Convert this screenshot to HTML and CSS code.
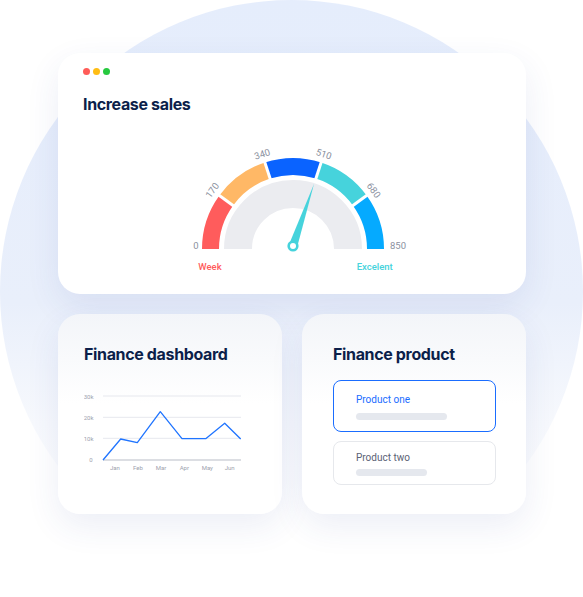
FILE: index.html
```html
<!DOCTYPE html>
<html lang="en">
<head>
<meta charset="utf-8">
<title>Sales dashboard</title>
<link rel="stylesheet" href="styles.css">
</head>
<body>
<div class="scene">
  <div class="stack">
    <section class="card card-top">
      <div class="dots">
        <span class="dot dot-red"></span>
        <span class="dot dot-yellow"></span>
        <span class="dot dot-green"></span>
      </div>
      <h2 class="title">Increase sales</h2>
      <svg class="gauge" width="240" height="140" viewBox="0 0 240 140">
        <g fill="none" stroke-width="17">
          <path d="M37.5 110 A82.5 82.5 0 0 1 53.26 61.51" stroke="#ff5c5c"/>
          <path d="M53.26 61.51 A82.5 82.5 0 0 1 94.51 31.53" stroke="#ffb866"/>
          <path d="M94.51 31.53 A82.5 82.5 0 0 1 145.49 31.53" stroke="#0a63ff"/>
          <path d="M145.49 31.53 A82.5 82.5 0 0 1 186.74 61.51" stroke="#46d3dc"/>
          <path d="M186.74 61.51 A82.5 82.5 0 0 1 202.5 110" stroke="#05aaff"/>
        </g>
        <g stroke="#fff" stroke-width="3">
          <line x1="61.75" y1="67.68" x2="43.95" y2="54.75"/>
          <line x1="97.75" y1="41.52" x2="90.95" y2="20.60"/>
          <line x1="142.25" y1="41.52" x2="149.05" y2="20.60"/>
          <line x1="178.25" y1="67.68" x2="196.05" y2="54.75"/>
        </g>
        <path d="M65 110 A55 55 0 0 1 175 110" fill="none" stroke="#ebecf0" stroke-width="28"/>
        <g class="gauge-num">
          <text x="25.5" y="110" text-anchor="end">0</text>
          <text x="39.1" y="51.2" text-anchor="middle" dominant-baseline="central" transform="rotate(-54 39.1 51.2)">170</text>
          <text x="89.1" y="14.9" text-anchor="middle" dominant-baseline="central" transform="rotate(-18 89.1 14.9)">340</text>
          <text x="150.9" y="14.9" text-anchor="middle" dominant-baseline="central" transform="rotate(18 150.9 14.9)">510</text>
          <text x="200.9" y="51.2" text-anchor="middle" dominant-baseline="central" transform="rotate(54 200.9 51.2)">680</text>
          <text x="217" y="110">850</text>
        </g>
        <polygon points="124,108.4 116,105.6 141,45" fill="#46d3dc"/>
        <circle cx="120" cy="107" r="5.6" fill="#46d3dc"/>
        <circle cx="120" cy="107" r="3" fill="#fff"/>
        <text class="gauge-lbl" x="25.3" y="127.3" dominant-baseline="central" fill="#ff5c5c">Week</text>
        <text class="gauge-lbl" x="183.7" y="127.3" dominant-baseline="central" fill="#46d3dc">Excelent</text>
      </svg>
    </section>
    <div class="row">
      <section class="card card-sm card-chart">
        <h2 class="title">Finance dashboard</h2>
        <svg class="chart" width="160" height="88" viewBox="0 0 160 88">
          <g stroke="#e6e8ee" stroke-width="1">
            <line x1="19" y1="8" x2="157" y2="8"/>
            <line x1="19" y1="29.3" x2="157" y2="29.3"/>
            <line x1="19" y1="50.3" x2="157" y2="50.3"/>
          </g>
          <line x1="19" y1="72" x2="157" y2="72" stroke="#b9bdc7" stroke-width="1"/>
          <g class="axis">
            <text x="9.5" y="8" text-anchor="end" dominant-baseline="central">30k</text>
            <text x="9.5" y="29.3" text-anchor="end" dominant-baseline="central">20k</text>
            <text x="9.5" y="50.3" text-anchor="end" dominant-baseline="central">10k</text>
            <text x="8.5" y="71" text-anchor="end" dominant-baseline="central">0</text>
            <text x="31" y="79.7" text-anchor="middle" dominant-baseline="central">Jan</text>
            <text x="54" y="79.7" text-anchor="middle" dominant-baseline="central">Feb</text>
            <text x="77" y="79.7" text-anchor="middle" dominant-baseline="central">Mar</text>
            <text x="100.3" y="79.7" text-anchor="middle" dominant-baseline="central">Apr</text>
            <text x="123.3" y="79.7" text-anchor="middle" dominant-baseline="central">May</text>
            <text x="145.7" y="79.7" text-anchor="middle" dominant-baseline="central">Jun</text>
          </g>
          <polyline points="19,72 36.7,51 53.3,54.7 76.3,23.7 98,50.7 121.7,50.7 140.7,35.3 156.7,51" fill="none" stroke="#1f74ff" stroke-width="1.3" stroke-linejoin="round"/>
        </svg>
      </section>
      <section class="card card-sm card-product">
        <h2 class="title">Finance product</h2>
        <div class="product product-active">
          <div class="product-name">Product one</div>
          <div class="product-bar bar-long"></div>
        </div>
        <div class="product">
          <div class="product-name">Product two</div>
          <div class="product-bar bar-short"></div>
        </div>
      </section>
    </div>
  </div>
</div>
</body>
</html>
```

FILE: styles.css
```css
* { box-sizing: border-box; }

html, body {
  margin: 0;
  padding: 0;
  background: #ffffff;
}

body {
  font-family: Roboto, "Liberation Sans", sans-serif;
}

.scene {
  position: relative;
  width: 583px;
  height: 597px;
  overflow: hidden;
}

.scene::before {
  content: "";
  position: absolute;
  left: 0;
  top: 0;
  width: 583px;
  height: 583px;
  border-radius: 50%;
  background: linear-gradient(180deg, #e5edfc 0%, #e9effb 52%, rgba(243, 246, 252, 0.7) 72%, rgba(255, 255, 255, 0) 88%);
}

.stack {
  position: relative;
  z-index: 1;
  display: flex;
  flex-direction: column;
  gap: 20px;
  padding: 53px 57px 0 58px;
}

.card {
  background: #ffffff;
  border-radius: 22px;
  box-shadow: 0 12px 34px rgba(40, 72, 150, 0.09);
}

.card-top {
  height: 241px;
  padding: 15px 25px 0;
}

.dots {
  display: flex;
  gap: 3px;
  height: 7px;
}

.dot {
  width: 7px;
  height: 7px;
  border-radius: 50%;
}

.dot-red { background: #ff5c58; }
.dot-yellow { background: #ffbd14; }
.dot-green { background: #27c93f; }

.title {
  margin: 0;
  font-family: Inter, "Liberation Sans", sans-serif;
  font-weight: 700;
  font-size: 16px;
  line-height: 20px;
  color: #0c1f4a;
  letter-spacing: -0.35px;
}

.card-top .title {
  margin-top: 19px;
}

.gauge {
  display: block;
  margin: 25px 0 0 90px;
}

.gauge-num text {
  font-family: Roboto, "Liberation Sans", sans-serif;
  font-size: 9.5px;
  fill: #8b91a0;
}

.gauge-lbl {
  font-family: Roboto, "Liberation Sans", sans-serif;
  font-size: 9.5px;
  font-weight: 500;
}

.row {
  display: grid;
  grid-template-columns: 224px 224px;
  gap: 20px;
}

.card-sm {
  height: 200px;
  background: linear-gradient(180deg, #f3f5f9 0%, #ffffff 45%);
}

.card-chart {
  padding: 30px 20px 0 26px;
}

.chart {
  display: block;
  margin-top: 24px;
}

.axis text {
  font-family: Roboto, "Liberation Sans", sans-serif;
  font-size: 6px;
  fill: #9da2ae;
}

.card-product {
  padding: 30px 30px 0 31px;
}

.card-product .title {
  margin-bottom: 16px;
}

.product {
  border: 1px solid #e6e8ec;
  border-radius: 8px;
  padding: 9px 22px 8px;
  background: #ffffff;
}

.product + .product {
  margin-top: 9px;
}

.product-name {
  font-size: 10px;
  line-height: 13px;
  color: #5b6275;
}

.product-bar {
  height: 6.5px;
  border-radius: 4px;
  background: #e5e8ee;
  margin-top: 5px;
}

.product-active {
  border-color: #1a6dff;
  padding: 12px 22px 11.5px;
}

.product-active .product-name {
  color: #1a6dff;
}

.product-active .product-bar {
  margin-top: 7px;
}

.bar-long { width: 91px; }
.bar-short { width: 71px; }
```
